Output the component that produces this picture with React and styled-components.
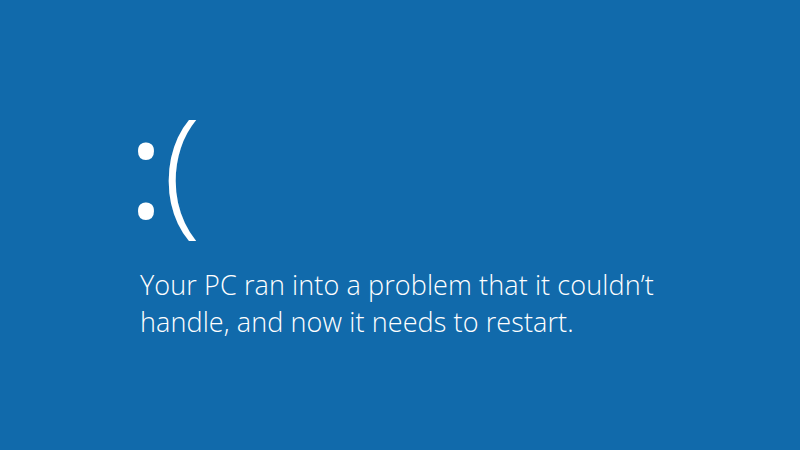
import React from "react";
import styled, { createGlobalStyle } from "styled-components";

const GlobalStyle = createGlobalStyle`
  html, body {
    margin: 0;
    padding: 0;
    background: #116aab;
  }
`;

const Screen = styled.div`
  width: 800px;
  height: 450px;
  background: #116aab;
  color: #ffffff;
  font-family: "Open Sans", "Noto Sans", sans-serif;
  font-weight: 300;
  display: flex;
  flex-direction: column;
  padding: 100px 0 0 128px;
  box-sizing: border-box;
  overflow: hidden;
`;

const Face = styled.div`
  display: flex;
  align-items: center;
  height: 130px;
`;

const Glyph = styled.span`
  display: block;
  line-height: 1;
  font-size: ${(p) => p.size}px;
  font-weight: ${(p) => p.weight};
  margin-left: ${(p) => p.gap || 0}px;
`;

const Message = styled.p`
  margin: 36px 0 0 12px;
  font-size: 27px;
  line-height: 37px;
  letter-spacing: 0.1px;
  width: 580px;
`;

const App = () => {
  return (
    <>
      <GlobalStyle />
      <Screen>
        <Face>
          <Glyph size={137} weight={400}>:</Glyph>
          <Glyph size={139} weight={300} gap={-1}>(</Glyph>
        </Face>
        <Message>
          Your PC ran into a problem that it couldn’t handle, and now it needs
          to restart.
        </Message>
      </Screen>
    </>
  );
};

export default App;
